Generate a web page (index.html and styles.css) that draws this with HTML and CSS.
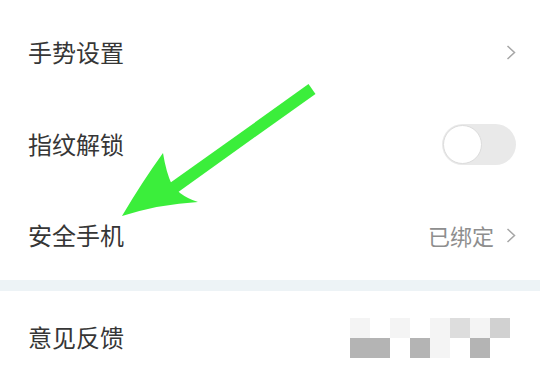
FILE: index.html
```html
<!DOCTYPE html>
<html lang="zh-CN">
<head>
<meta charset="utf-8">
<title>设置</title>
<link rel="stylesheet" href="styles.css">
</head>
<body>
<div class="page">
  <div class="list">
    <div class="row">
      <span class="label">手势设置</span>
      <span class="right">
        <svg class="chev" viewBox="0 0 10 15" width="10" height="15"><polyline points="1.5,1 8.5,7.5 1.5,14" /></svg>
      </span>
    </div>
    <div class="row">
      <span class="label">指纹解锁</span>
      <span class="switch"><span class="knob"></span></span>
    </div>
    <div class="row row-last">
      <span class="label">安全手机</span>
      <span class="right">
        <span class="value">已绑定</span>
        <svg class="chev" viewBox="0 0 10 15" width="10" height="15"><polyline points="1.5,1 8.5,7.5 1.5,14" /></svg>
      </span>
    </div>
  </div>
  <div class="sep"></div>
  <div class="list">
    <div class="row row-mosaic">
      <span class="label">意见反馈</span>
      <div class="mosaic">
        <i class="m1"></i><i class="m0"></i><i class="m1"></i><i class="m0"></i><i class="m1"></i><i class="m2"></i><i class="m1"></i><i class="m2b"></i>
        <i class="m3"></i><i class="m3"></i><i class="m0"></i><i class="m3"></i><i class="m1"></i><i class="m0"></i><i class="m3"></i><i class="m0"></i>
      </div>
    </div>
  </div>
  <svg class="arrow" viewBox="0 0 540 367" width="540" height="367">
    <line x1="312" y1="89" x2="172" y2="189" class="shaft" />
    <path class="head" d="M122,216 Q142,182 163,153 Q166,172 172,185 L180,193 Q188,199 198,202 Q160,204 122,216 Z" />
  </svg>
</div>
</body>
</html>
```
FILE: styles.css
```css
* { box-sizing: border-box; }
html, body {
  margin: 0;
  padding: 0;
  background: #ffffff;
}
body {
  font-family: "Noto Sans CJK SC", "Noto Sans", sans-serif;
  color: #333333;
}
.page {
  position: relative;
  width: 540px;
  height: 367px;
  overflow: hidden;
}
.list:first-child {
  padding-top: 6px;
}
.row {
  height: 92px;
  display: flex;
  align-items: center;
  justify-content: space-between;
  padding: 0 24px 0 28px;
}
.row-last {
  height: 90px;
}
.label {
  font-size: 24px;
  line-height: 1;
  color: #363636;
  letter-spacing: 0;
}
.right {
  display: flex;
  align-items: center;
  gap: 12px;
}
.value {
  font-size: 22px;
  line-height: 1;
  color: #8e8e8e;
}
.chev {
  display: block;
  fill: none;
  stroke: #a6a6a6;
  stroke-width: 1.5;
}
.switch {
  width: 74px;
  height: 41px;
  border-radius: 21px;
  background: #e9e9e9;
  display: flex;
  align-items: center;
  padding-left: 1px;
}
.knob {
  width: 39px;
  height: 39px;
  border-radius: 50%;
  background: #ffffff;
  border: 1.5px solid #dcdcdc;
}
.sep {
  height: 11px;
  background: #edf3f6;
}
.row-mosaic {
  padding-right: 30px;
}
.mosaic {
  display: grid;
  grid-template-columns: repeat(8, 20px);
  grid-template-rows: repeat(2, 20px);
  margin-top: 2px;
}
.mosaic i { display: block; }
.m0 { background: #ffffff; }
.m1 { background: #f4f4f4; }
.m2 { background: #dddddd; }
.m2b { background: #d1d1d1; }
.m3 { background: #b4b4b4; }
.arrow {
  position: absolute;
  left: 0;
  top: 0;
  pointer-events: none;
}
.shaft {
  stroke: #3bee3b;
  stroke-width: 12;
  stroke-linecap: butt;
}
.head {
  fill: #3bee3b;
}
```
